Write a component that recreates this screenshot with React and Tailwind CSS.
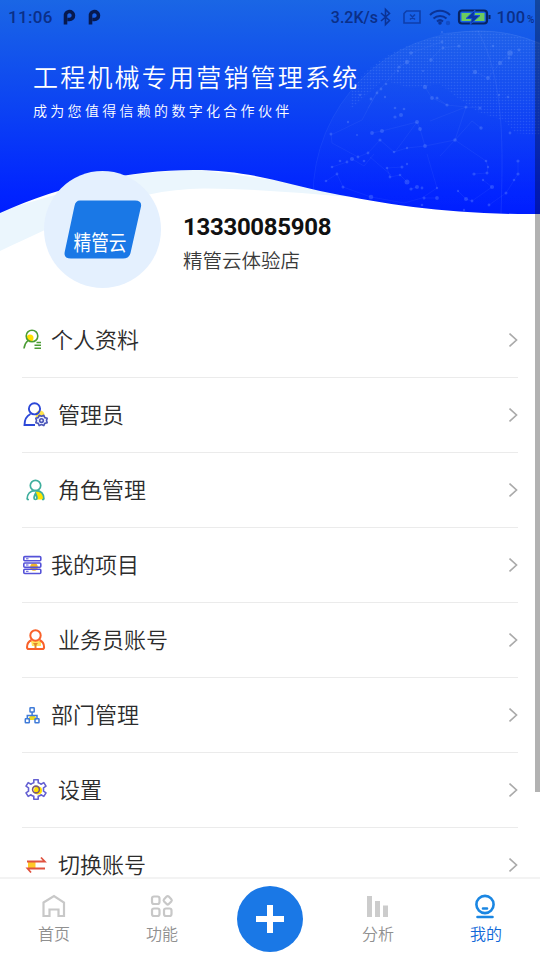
import clsx from 'clsx';

const nodes = [
  [442, 42, 1.4], [442, 32, 1], [459, 46, 1.6], [443, 48, 1.4], [411, 53, 1.8], [407, 62, 2.2], [431, 60, 1.8],
  [399, 67, 1.5], [398, 71, 1.2], [423, 71, 1], [510, 53, 2.8], [500, 63, 2.2], [509, 58, 1.4], [519, 50, 1.4],
  [475, 72, 2.2], [488, 78, 1.9], [425, 87, 2.2], [432, 98, 1.9], [437, 98, 1.5], [447, 105, 1.6], [466, 107, 1.5],
  [480, 108, 1.5], [386, 84, 1.3], [381, 89, 1.4], [377, 93, 1.4], [371, 99, 1.4], [385, 97, 1.2], [395, 108, 1.3],
  [404, 109, 1.3], [401, 115, 2], [395, 117, 1.6], [417, 122, 2], [420, 129, 1.9], [382, 131, 2], [372, 133, 1.9],
  [380, 140, 1.6], [357, 135, 1], [331, 134, 1.5], [455, 140, 1.8], [425, 146, 1.9], [407, 148, 1.2], [394, 152, 1.3],
  [481, 128, 1.7], [510, 133, 1.4], [352, 159, 2], [358, 157, 1.4], [347, 162, 1.4], [340, 161, 1.3], [368, 153, 1.4],
  [364, 161, 1.3], [332, 167, 1.3], [337, 174, 1.4], [326, 181, 1.3], [343, 187, 1.5], [402, 167, 1.5], [407, 164, 1.2],
  [387, 168, 1.3], [390, 177, 1.4], [400, 175, 1.3], [407, 182, 2.5], [411, 189, 1.6], [417, 187, 2], [422, 188, 1.4],
  [371, 197, 2.3], [437, 198, 1.9], [437, 188, 1.2], [424, 198, 1.5], [422, 205, 1.3], [458, 191, 1.2], [466, 199, 2],
  [472, 201, 1.4], [464, 210, 1.2], [492, 187, 2.1], [474, 174, 1.6], [487, 173, 1.5], [486, 161, 1.3], [488, 167, 1.2],
  [518, 161, 1.6], [518, 174, 1.6], [514, 180, 1.3], [506, 193, 1.5], [489, 205, 1.4], [483, 180, 1.2], [499, 95, 1.2],
  [493, 46, 1.3], [508, 97, 1.3], [348, 122, 1.2], [360, 95, 1.2],
];

const links = [
  'M425 87l7 11 15 7-10-7M447 105l19 2 14 1M475 72l13 6 12-15 10-10M407 62l-8 5-22 26-9 15',
  'M382 131l35-9 3 7 5 17 30-6 11-33M382 131l-10 2M380 140l14 12 13-4 18-2M455 140l17-19 9 7',
  'M331 134l1 9 26 14 10-4 12-13M352 159l12 7 10-12M332 167l15-5M326 181l11-7 6 13 28 10',
  'M371 197l33 6 18-5 15-10M407 182l-7-7-10 2-3-9 15-1M417 187l-6 2M437 198l-13 0M455 140l-15 16M455 140l31 21',
  'M458 191l8 8 6 2 20-14-9-7M486 161l2 6-1 6-13 1M518 161v13l-12 19-17 12M443 48l16-2M411 53l30-11',
  'M417 122l-22 30M391 175l-21-18M466 107l-36 14M430 60l12-12M378 90l-16 30-29 14M437 188l-10-34',
];

function Backdrop() {
  return (
    <svg className="absolute inset-0 h-[303px] w-full" viewBox="0 0 540 303">
      <defs>
        <linearGradient id="sky" x1="0" y1="0" x2="0" y2="214" gradientUnits="userSpaceOnUse">
          <stop offset="0" stopColor="#1a66e5" />
          <stop offset="0.5" stopColor="#0c43f3" />
          <stop offset="0.9" stopColor="#0124ff" />
          <stop offset="1" stopColor="#001eff" />
        </linearGradient>
        <linearGradient id="globe" x1="0" y1="30" x2="0" y2="214" gradientUnits="userSpaceOnUse">
          <stop offset="0" stopColor="#fff" stopOpacity="0.04" />
          <stop offset="1" stopColor="#fff" stopOpacity="0" />
        </linearGradient>
        <pattern id="dots" width="3" height="3" patternUnits="userSpaceOnUse">
          <circle cx="1.5" cy="1.5" r="0.8" fill="#9fc0ff" />
        </pattern>
        <clipPath id="wave">
          <path d="M0 0H540V214C455 215 390 205 330 193C285 184 250 170 193 170C130 170 65 184 0 213Z" />
        </clipPath>
      </defs>
      <path
        d="M0 251C55 225 130 188 205 188.500C260 189 300 193 350 197L290 182L193 169L120 176L0 211Z"
        fill="#ebf6fd"
      />
      <g clipPath="url(#wave)">
        <rect width="540" height="220" fill="url(#sky)" />
        <circle cx="478" cy="196" r="165" fill="url(#globe)" />
        <circle cx="478" cy="196" r="165" fill="none" stroke="#8fb0ff" strokeOpacity="0.12" strokeWidth="0.8" />
        <path
          d="M352 88C375 55 420 34 478 31C505 32 525 38 540 44V135L515 133L505 121L478 112L455 96L440 84L410 88L383 80L350 110Z"
          fill="url(#dots)"
          opacity="0.16"
        />
        <path d="M478 31C505 80 503 150 501 214M540 44C500 26 470 31 440 34" fill="none" stroke="#8fb0ff" strokeOpacity="0.16" strokeWidth="0.8" />
        {links.map(d => (
          <path key={d} d={d} fill="none" stroke="#9dbcff" strokeOpacity="0.11" strokeWidth="0.7" />
        ))}
        {nodes.map(([x, y, r]) => (
          <circle key={`${x}-${y}`} cx={x} cy={y} r={r} fill="#8fb4ff" opacity="0.25" />
        ))}
      </g>
    </svg>
  );
}

function PIcon() {
  return (
    <svg className="h-[17px] w-[13px]" viewBox="0 0 13 17">
      <path d="M2.500 15.500V7A4 4 0 1 1 6.500 10.500H4.500" fill="none" stroke="#07194f" strokeWidth="3.600" />
    </svg>
  );
}

function StatusBar() {
  return (
    <div className="relative flex h-[34px] items-center pl-2 font-[Roboto] text-[17px] font-medium text-[#0b2f88]">
      <span className="w-[55px] pt-px tracking-[0.3px]">11:06</span>
      <div className="flex gap-3">
        <PIcon />
        <PIcon />
      </div>
      <span className="ml-auto pt-px text-[16px]">3.2K/s</span>
      <svg className="mr-[3px] h-5 w-[159px]" viewBox="0 0 159 20" fill="none" stroke="#0b3396" strokeWidth="1.600">
        <path d="M3 6l8.500 7.500-4 4V2.500l4 4L3 14" />
        <path d="M28.500 4H42V16H26V6.500ZM32 7.500l5 5M37 7.500l-5 5" strokeOpacity="0.75" />
        <g strokeWidth="2">
          <path d="M52 8a14 14 0 0 1 20 0M55.500 11.500a9.500 9.500 0 0 1 13 0M59 14.500a4.500 4.500 0 0 1 6 0" />
          <circle cx="62" cy="16" r="0.800" />
          <circle cx="70" cy="16" r="1.200" strokeOpacity="0.4" />
        </g>
        <rect x="81" y="3.500" width="28" height="13" rx="3" stroke="#072364" strokeWidth="2.200" />
        <rect x="83.500" y="6" width="23" height="8" fill="#6ccb5f" stroke="none" />
        <path d="M111.500 8v4" stroke="#072364" strokeWidth="2" />
        <path d="M97 3L88 11.500h6L92 17.500l10-9h-6Z" fill="#0b36a0" stroke="#1751d8" strokeWidth="1" />
        <text x="118.500" y="15.500" fill="#0b2f88" stroke="none" fontSize="16.500" letterSpacing="0.300">100</text>
        <text x="149" y="15.500" fill="#0b2f88" stroke="none" fontSize="10">%</text>
      </svg>
    </div>
  );
}

const icons = {
  profile: (
    <>
      <circle cx="30" cy="18" r="3.500" fill="#ffe100" stroke="none" />
      <g stroke="#4b9c35" strokeWidth="1.600">
        <circle cx="32" cy="16" r="5.800" />
        <path d="M28 20.500q-3.500 3-4 8" />
        <path d="M36.500 22.500h4.500M34.500 25.300H41M34.500 28.200H41" />
      </g>
    </>
  ),
  admin: (
    <>
      <circle cx="40" cy="20" r="4.500" fill="#ffe34a" stroke="none" />
      <g stroke="#2c48d8" strokeWidth="1.900">
        <circle cx="34.500" cy="13.800" r="5.600" />
        <path d="M30.500 19c-4 2-6 6-6 11H35" />
      </g>
      <g stroke="#4b57b8" strokeWidth="1.600">
        <path
          d="M39.200 20.300l2.300 1 2.300-1 1 2.300 2.400.6-.7 2.300.7 2.300-2.400.6-1 2.200-2.300-1-2.300 1-1-2.200-2.400-.6.7-2.300-.7-2.300 2.400-.6Z"
          fill="#eef0ff"
          strokeLinejoin="round"
        />
        <circle cx="41.500" cy="25.500" r="1.800" />
      </g>
    </>
  ),
  role: (
    <>
      <path d="M36 20.500q7 1 8 9h-7l-1-4Z" fill="#ffe600" stroke="none" />
      <g stroke="#3fae9d" strokeWidth="1.700">
        <circle cx="35.500" cy="15.500" r="5.200" />
        <path d="M27 29.500c0-6 3.500-8.800 8.500-8.800s8.500 2.800 8.500 8.800M27 29.500h2M42 29.500h2" />
        <path d="M35.500 23.500q-1.500 3-1.500 4.500a1.500 1.500 0 0 0 3 0q0-1.500-1.500-4.500Z" fill="#e8fff6" />
      </g>
    </>
  ),
  project: (
    <g stroke="#5552d8" strokeWidth="1.600">
      <circle cx="34" cy="22" r="3.800" fill="#f0b429" stroke="none" />
      <rect x="23.800" y="11.600" width="17" height="4.200" rx="1" />
      <rect x="23.800" y="18" width="17" height="4.200" rx="1" />
      <rect x="23.800" y="24.300" width="17" height="4.200" rx="1" />
      <path d="M26 13.800h2.500M26 20h2.500M26 26.300h2.500" strokeWidth="1" />
    </g>
  ),
  salesman: (
    <>
      <path d="M31 21h10v5H32Z" fill="#ffe15a" stroke="none" />
      <g stroke="#f9612a" strokeWidth="2">
        <circle cx="35.500" cy="15.500" r="5.200" />
        <path d="M31.500 20c-3 1.500-4.500 4-4.500 7.200q0 1.800 1.800 1.800h13.500q1.800 0 1.800-1.800c0-3.200-1.500-5.700-4.500-7.200" />
      </g>
      <path d="M33 23h5l-1.500 2v3h-2v-3Z" fill="#e0862a" stroke="none" />
    </>
  ),
  department: (
    <>
      <path d="M28.500 25q0-4.500 4-4.500t4 4.500Z" fill="#ecd91f" stroke="none" />
      <g stroke="#3f7bd8" strokeWidth="1.500">
        <rect x="30" y="12.800" width="4.200" height="4.200" rx="0.500" />
        <rect x="25.300" y="23.700" width="4" height="4" rx="0.500" />
        <rect x="35" y="23.700" width="4" height="4" rx="0.500" />
        <path d="M32.100 17v3.500M27.300 23.500v-2.900h9.700v2.900" />
      </g>
    </>
  ),
  settings: (
    <g stroke="#6460d2" strokeWidth="1.600">
      <circle cx="38" cy="20.500" r="4" fill="#ffe100" stroke="none" />
      <path
        d="M33.800 9.800h4.400v3q1.800.5 2.800 1.400l2.800-1.600 2.200 3.600-2.500 1.600v3.400l2.500 1.600-2.200 3.600-2.800-1.600q-1 .9-2.800 1.400v3h-4.400v-3q-1.800-.5-2.800-1.400l-2.800 1.600-2.200-3.600 2.500-1.600v-3.400l-2.500-1.600 2.200-3.600 2.800 1.600q1-.9 2.800-1.400Z"
        strokeLinejoin="round"
      />
      <circle cx="36" cy="19.500" r="3.400" stroke="#7a5a78" />
    </g>
  ),
  switch: (
    <>
      <rect x="28" y="16.500" width="7.500" height="7" fill="#ffc928" stroke="none" />
      <path d="M27 16.500H44.800L41 12.500M45 23.500H27.500l3.500 4" stroke="#e0523f" strokeWidth="1.800" />
    </>
  ),
};

const menu = [
  { icon: 'profile', label: '个人资料', narrow: true },
  { icon: 'admin', label: '管理员' },
  { icon: 'role', label: '角色管理' },
  { icon: 'project', label: '我的项目', narrow: true },
  { icon: 'salesman', label: '业务员账号' },
  { icon: 'department', label: '部门管理', narrow: true },
  { icon: 'settings', label: '设置' },
  { icon: 'switch', label: '切换账号' },
];

function MenuRow({ icon, label, narrow }) {
  return (
    <div className="mx-[22px] flex h-[75px] items-center border-b border-[#ebebeb]">
      <svg
        className={clsx('h-10 shrink-0', narrow ? 'w-[29px]' : 'w-9')}
        viewBox={narrow ? '22 0 29 40' : '22 0 36 40'}
        fill="none"
      >
        {icons[icon]}
      </svg>
      <span className="mb-1 text-[22px] leading-[30px] font-[350] text-[#2c2c2c]">{label}</span>
      <svg className="mb-px ml-auto h-4 w-[9px]" viewBox="0 0 9 16" fill="none" stroke="#aaa" strokeWidth="1.700">
        <path d="M0.500 1.500l7 6.500-7 6.500" />
      </svg>
    </div>
  );
}

const tabs = [
  {
    label: '首页',
    icon: <path d="M3.500 8.500L14 2l10 6.500V22h-5.500v-6.500h-9V22h-6Z" />,
  },
  {
    label: '功能',
    icon: (
      <>
        <rect x="4" y="2.500" width="7.500" height="7.500" rx="2" />
        <path d="M18.600 2.600q1.100-1 2.200 0l2.500 2.600q1 1.100 0 2.200l-2.500 2.600q-1.100 1-2.200 0l-2.500-2.600q-1-1.100 0-2.200Z" />
        <rect x="4" y="14.500" width="7.500" height="7.500" rx="2" />
        <rect x="16" y="14.500" width="7.500" height="7.500" rx="2" />
      </>
    ),
  },
  null,
  {
    label: '分析',
    icon: <path d="M3 2h5v21H3ZM11 7h5v16h-5ZM19 11.500h5V23h-5Z" fill="#ccc" stroke="none" />,
  },
  {
    label: '我的',
    active: true,
    icon: (
      <g stroke="#1a86e2" strokeWidth="2.600">
        <circle cx="13" cy="10.500" r="8.600" />
        <path d="M11 14.500h4M5.500 23h15" strokeLinecap="round" />
      </g>
    ),
  },
];

function TabBar() {
  return (
    <nav className="flex h-[83px] shrink-0 border-t-2 border-[#f3f3f3] bg-white">
      {tabs.map((tab, i) =>
        tab ? (
          <div key={tab.label} className="flex flex-1 flex-col items-center pt-[15px]">
            <svg className="h-[26px] w-7" viewBox="0 0 28 26" fill="none" stroke="#c8c8c8" strokeWidth="2.200">
              {tab.icon}
            </svg>
            <span
              className={clsx('mt-px text-[16px] leading-6 font-[350]', tab.active ? 'text-[#1068d8]' : 'text-[#909090]')}
            >
              {tab.label}
            </span>
          </div>
        ) : (
          <div key={i} className="flex flex-1 justify-center pt-[7px]">
            <div className="flex size-[66px] items-center justify-center rounded-full bg-[#1a78e6]">
              <svg className="size-7" viewBox="0 0 28 28" stroke="#fff" strokeWidth="6">
                <path d="M14 0v28M0 14h28" />
              </svg>
            </div>
          </div>
        )
      )}
    </nav>
  );
}

export default function App() {
  return (
    <div className="relative flex h-[960px] w-[540px] flex-col overflow-hidden bg-white font-['Noto_Sans_CJK_SC',sans-serif]">
      <header className="relative h-[303px] shrink-0">
        <Backdrop />
        <StatusBar />
        <div className="relative h-[137px] pt-[24px] pl-[33px] text-white">
          <h1 className="text-[25px] leading-9 font-[350] tracking-[2.200px]">工程机械专用营销管理系统</h1>
          <p className="mt-1 text-[14px] leading-6 font-[350] tracking-[3.300px]">成为您值得信赖的数字化合作伙伴</p>
        </div>
        <div className="relative ml-11 flex">
          <div className="flex size-[117px] items-center justify-center rounded-full bg-[#e4f0fe]">
            <svg className="h-[60px] w-[78px]" viewBox="0 0 78 60">
              <path d="M16 0.500H71Q78 0.500 77 6.500L66.500 53Q65 58.500 59 58.500H7Q-0.500 58.500 0.700 52L10.500 6Q11.500 0.500 16 0.500Z" fill="#1a78e6" />
              <text x="9.500" y="50" fill="#fff" fontSize="21" textLength="53" lengthAdjust="spacingAndGlyphs">精管云</text>
            </svg>
          </div>
          <div className="ml-[22px] pt-[40px]">
            <div className="font-[Roboto] text-[24px] leading-8 font-bold tracking-[-0.300px] text-[#111]">13330085908</div>
            <div className="mt-px text-[19.500px] leading-8 font-[350] text-[#3a3a3a]">精管云体验店</div>
          </div>
        </div>
      </header>
      <main className="min-h-0 flex-1 overflow-hidden">
        {menu.map(item => (
          <MenuRow key={item.label} {...item} />
        ))}
      </main>
      <TabBar />
      <div className="absolute top-0 right-0 h-[792px] w-[5px] bg-black/30" />
    </div>
  );
}
